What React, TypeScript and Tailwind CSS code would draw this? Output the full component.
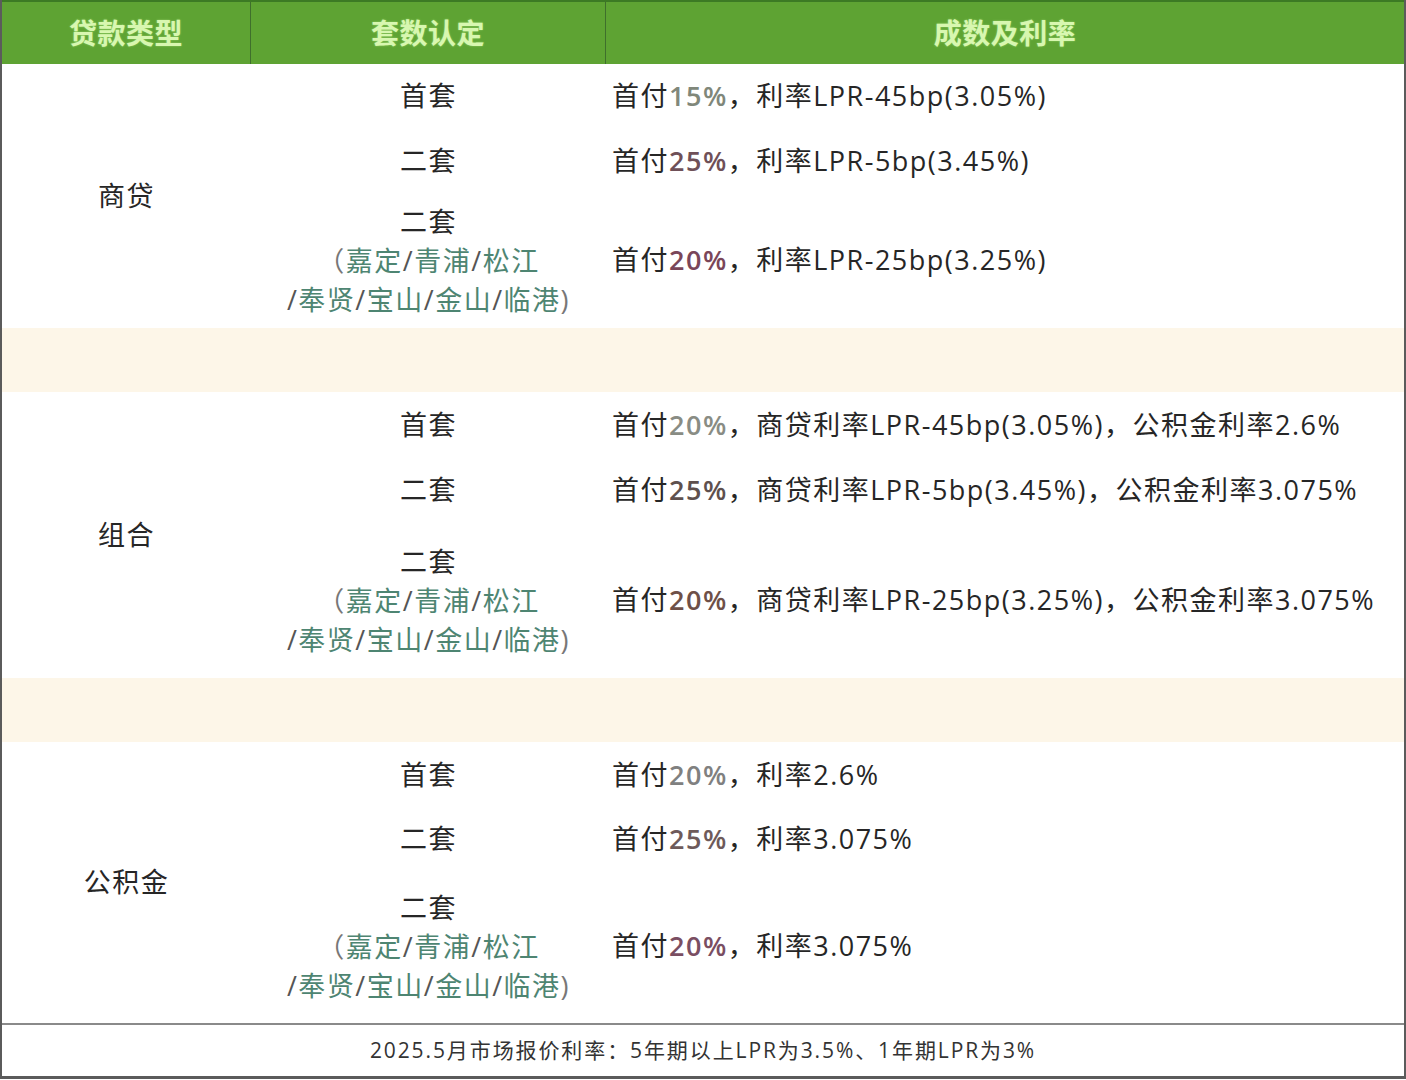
const font = { fontFamily: '"Open Sans", "Noto Sans CJK SC", sans-serif' };

type Row = { kind: "first" | "second" | "region"; pct: string; pctColor: string; rest: string };
type Section = { label: string; h: string; rowH: [string, string]; rows: Row[] };

const sections: Section[] = [
  {
    label: "商贷",
    h: "h-[264px]",
    rowH: ["h-[65px]", "h-[64px]"],
    rows: [
      { kind: "first", pct: "15%", pctColor: "text-[#80877a]", rest: "，利率LPR-45bp(3.05%)" },
      { kind: "second", pct: "25%", pctColor: "text-[#6f5058]", rest: "，利率LPR-5bp(3.45%)" },
      { kind: "region", pct: "20%", pctColor: "text-[#7a4659]", rest: "，利率LPR-25bp(3.25%)" },
    ],
  },
  {
    label: "组合",
    h: "h-[286px]",
    rowH: ["h-[66px]", "h-[64px]"],
    rows: [
      { kind: "first", pct: "20%", pctColor: "text-[#898c84]", rest: "，商贷利率LPR-45bp(3.05%)，公积金利率2.6%" },
      { kind: "second", pct: "25%", pctColor: "text-[#5e504e]", rest: "，商贷利率LPR-5bp(3.45%)，公积金利率3.075%" },
      { kind: "region", pct: "20%", pctColor: "text-[#6e5048]", rest: "，商贷利率LPR-25bp(3.25%)，公积金利率3.075%" },
    ],
  },
  {
    label: "公积金",
    h: "h-[281px]",
    rowH: ["h-[66px]", "h-[62px]"],
    rows: [
      { kind: "first", pct: "20%", pctColor: "text-[#808080]", rest: "，利率2.6%" },
      { kind: "second", pct: "25%", pctColor: "text-[#6e5a5a]", rest: "，利率3.075%" },
      { kind: "region", pct: "20%", pctColor: "text-[#7a4e62]", rest: "，利率3.075%" },
    ],
  },
];

function Region({ names }: { names: string[] }) {
  return (
    <>
      {names.map((n, i) => (
        <span key={i}>
          {i > 0 && <span className="text-[#555]">/</span>}
          <span className="text-[#4e8572]">{n}</span>
        </span>
      ))}
    </>
  );
}

function SetCell({ kind }: { kind: Row["kind"] }) {
  if (kind === "first") return <span>首套</span>;
  if (kind === "second") return <span>二套</span>;
  return (
    <div className="flex flex-col items-center leading-[39px]">
      <span>二套</span>
      <span>
        <span className="text-[#777]">（</span>
        <Region names={["嘉定", "青浦", "松江"]} />
      </span>
      <span>
        <span className="text-[#555]">/</span>
        <Region names={["奉贤", "宝山", "金山", "临港"]} />
        <span className="text-[#777]">)</span>
      </span>
    </div>
  );
}

function SectionBlock({ s }: { s: Section }) {
  return (
    <div className={`flex ${s.h}`}>
      <div className="w-[249px] shrink-0 flex items-center justify-center">{s.label}</div>
      <div className="flex-1 flex flex-col">
        {s.rows.map((r, i) => (
          <div key={i} className={`flex ${i < 2 ? s.rowH[i] : "flex-1"}`}>
            <div className="w-[355px] shrink-0 flex items-center justify-center">
              <SetCell kind={r.kind} />
            </div>
            <div className="flex-1 flex items-center pl-[6px] whitespace-nowrap">
              <span>首付</span>
              <span className={`font-semibold ${r.pctColor}`}>{r.pct}</span>
              <span>{r.rest}</span>
            </div>
          </div>
        ))}
      </div>
    </div>
  );
}

export default function App() {
  return (
    <div
      className="w-[1406px] h-[1080px] bg-white text-[#262626] text-[27px] tracking-[1.5px] overflow-hidden"
      style={font}
    >
      <div className="h-[1079px] border-l-2 border-r-2 border-b-[3px] border-[#5b5b5b] flex flex-col">
        {/* HEADER */}
        <div className="h-[64px] flex bg-[#5ea333] border-t-2 border-[#3c7a24] text-[#d8f7b0] font-bold text-[28px] tracking-[0.5px] [text-shadow:0_0_2px_#9bd46f]">
          <div className="w-[249px] shrink-0 flex items-center justify-center border-r border-[#3f6f2c]">贷款类型</div>
          <div className="w-[355px] shrink-0 flex items-center justify-center border-r border-[#3f6f2c]">套数认定</div>
          <div className="flex-1 flex items-center justify-center">成数及利率</div>
        </div>

        <SectionBlock s={sections[0]} />
        <div className="h-[64px] bg-[#fdf6e8]" />
        <SectionBlock s={sections[1]} />
        <div className="h-[64px] bg-[#fdf6e8]" />
        <SectionBlock s={sections[2]} />

        {/* FOOTER */}
        <div className="flex-1 border-t-2 border-[#8a8a8a] flex items-center justify-center text-[21px] text-[#333] tracking-[1.9px]">
          2025.5月市场报价利率：5年期以上LPR为3.5%、1年期LPR为3%
        </div>
      </div>
    </div>
  );
}
